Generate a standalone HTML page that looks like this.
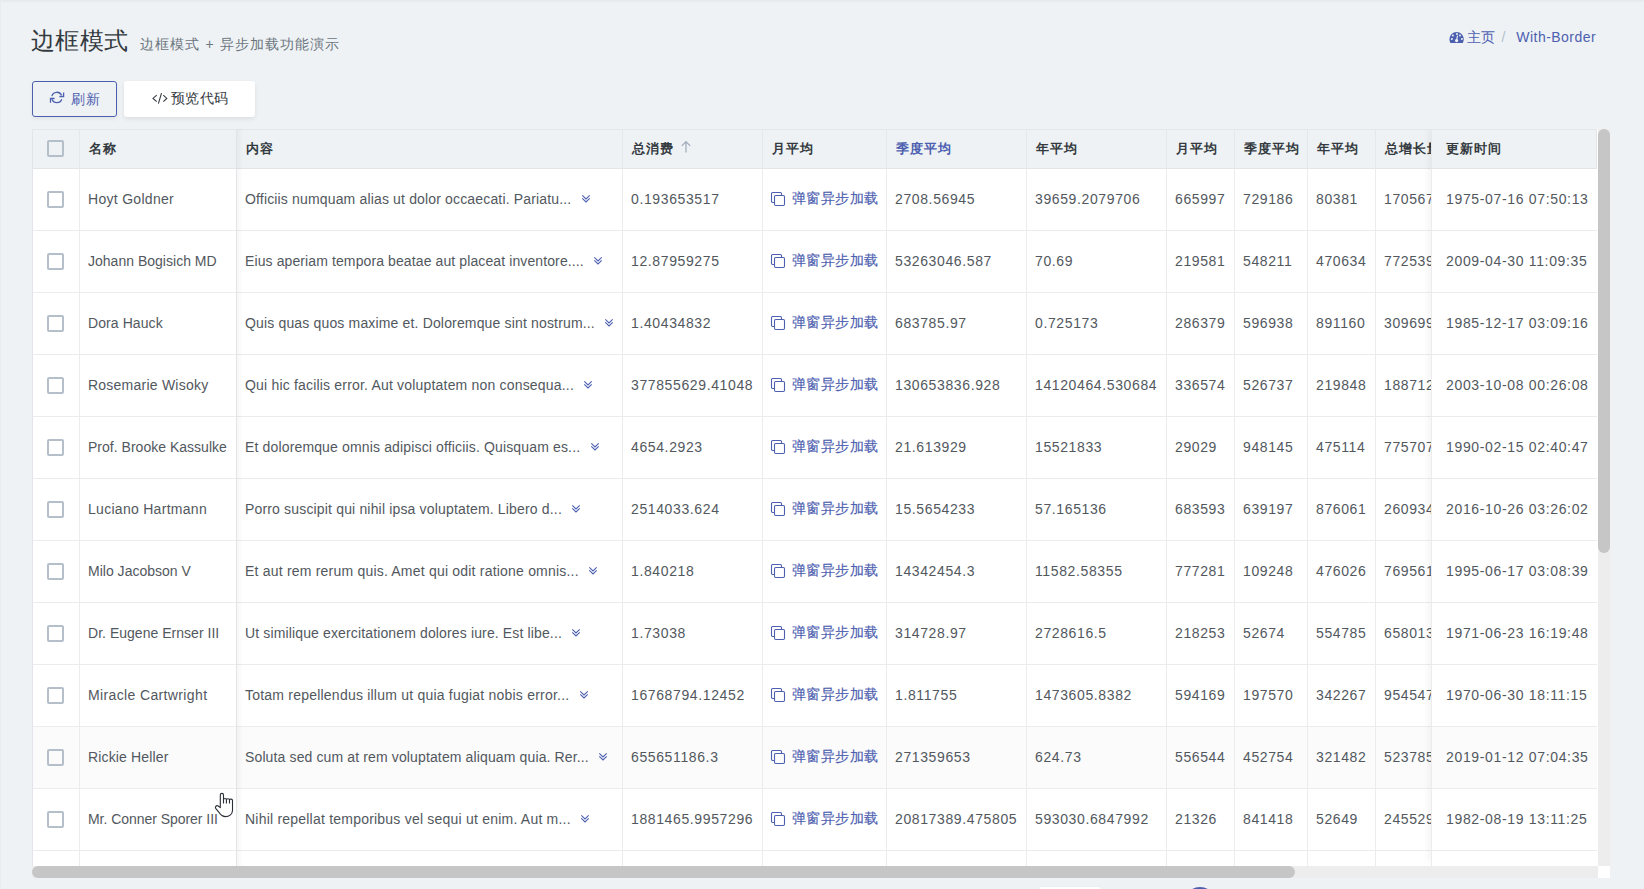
<!DOCTYPE html>
<html><head><meta charset="utf-8">
<style>
*{box-sizing:border-box}
html,body{margin:0;padding:0}
body{width:1644px;height:889px;overflow:hidden;background:#eef2f5;font-family:"Liberation Sans",sans-serif;color:#52585e;position:relative}
.topsh{position:absolute;left:0;top:0;width:1644px;height:3px;background:linear-gradient(#e5e8eb,#eef2f5)}
.lsh0{position:absolute;left:0;top:0;width:1px;height:889px;background:#e9ecef}
.title{position:absolute;left:31px;top:24.5px;font-size:24.4px;line-height:32px;letter-spacing:0.4px;color:#343a40;white-space:nowrap}
.sub{position:absolute;left:140px;top:33.5px;font-size:14px;line-height:20px;color:#6c757d;letter-spacing:1.1px;white-space:nowrap}
.bc{position:absolute;right:48px;top:28px;font-size:14px;line-height:18px;color:#4d60b0;white-space:nowrap;display:flex;align-items:center}
.bc .sep{color:#b3c0cc;margin:0 11px 0 6px}
.bc .wb{letter-spacing:0.45px}
.btn{position:absolute;top:81px;height:36px;border-radius:3px;font-size:14px;white-space:nowrap}
.bt{position:absolute;top:8px;line-height:20px;font-size:13.5px;letter-spacing:0.5px}
.b1{left:32px;width:85px;border:1px solid #4d60b0;color:#4d60b0;box-shadow:0 2px 4px rgba(0,0,0,.06)}
.b2{left:124px;width:131px;background:#fff;color:#343a40;box-shadow:0 2px 4px rgba(0,0,0,.08)}
.wrap{position:absolute;left:32px;top:129px;width:1578px;height:749px;background:#fff}
.tbl{position:absolute;left:0;top:0;width:1566px;height:737px;overflow:hidden;background:#fff}
.c{position:absolute;border-left:1px solid #ececec;border-bottom:1px solid #ececec;display:flex;align-items:center;padding-left:8px;white-space:nowrap;overflow:hidden;font-size:14px}
.hd{padding-left:9px;background:#eef2f5;border-top:1px solid #e4e7ea;border-bottom-color:#e2e4e7;border-left-color:#e6e7e9}
.first{justify-content:center;padding-left:0;border-left-color:#e1e4e8}
.bd{background:#fff;padding-bottom:2px}
.hov{background:#fbfbfc}
.cb{width:17px;height:17px;border:2px solid #b4bfca;border-radius:2px;background:transparent;margin-left:-1px}
.ht{font-weight:bold;color:#343a40;font-size:13px;letter-spacing:1px;margin-top:0.5px}
.ht.blue{color:#4d60b0}
.sort{margin-left:6.5px;flex:none;margin-top:-3.5px}
.tx{letter-spacing:0.12px}
.num{letter-spacing:0.62px}
.fr .num{letter-spacing:0.66px}
.chev{margin-left:9.5px;margin-top:1px;flex:none}
.copy{flex:none;margin-left:-1px;margin-right:6px;margin-top:1px}
.lk{color:#4d60b0;font-size:13.5px;letter-spacing:0.4px;margin-top:1px;-webkit-text-stroke:0.15px #4d60b0}
.fix{position:absolute;left:1399px;top:0;width:167px;height:733px;background:#fff;box-shadow:-3px 0 6px rgba(0,0,0,.045)}
.fr{padding-left:14px}
.hd .cb{margin-top:-1px}
.bd .cb{margin-top:2px}
.lfix{position:absolute;left:204px;top:0;width:1px;height:737px;background:#e3e4e6}
.lsh{position:absolute;left:205px;top:0;width:6px;height:737px;background:linear-gradient(90deg,rgba(0,0,0,.035),rgba(0,0,0,0))}
.fix .c:first-child{border-top:1px solid #e4e7ea;border-right:1px solid #e3e5e8}
.vs{position:absolute;left:1566px;top:0;width:12px;height:737px;background:#ededed}
.vs .th{position:absolute;left:0;top:0;width:12px;height:424px;border-radius:6px;background:#c6c6c6}
.hs{position:absolute;left:0;top:737px;width:1566px;height:12px;background:#ededed}
.hs .th{position:absolute;left:0;top:0;width:1263px;height:12px;border-radius:6px;background:#c6c6c6}
.corner{position:absolute;left:1566px;top:737px;width:12px;height:12px;background:#fff}
.cursor{position:absolute;left:214px;top:792px}
.pg1{position:absolute;left:1039px;top:887px;width:62px;height:6px;background:#fff;border-radius:3px;box-shadow:0 0 2px rgba(0,0,0,.05)}
.pg2{position:absolute;left:1184px;top:887px;width:32px;height:32px;border-radius:50%;background:#4d60b0}
</style></head><body>
<div class="topsh"></div><div class="lsh0"></div>
<div class="title">边框模式</div>
<div class="sub">边框模式 + 异步加载功能演示</div>
<div class="bc">
<svg width="16" height="13" viewBox="0 0 16 13" style="margin-right:2px;margin-left:1px;margin-top:1px"><path d="M1.4 11.9 C0.9 11 0.5 9.6 0.5 8.2 C0.5 4.2 3.8 1 7.6 1 C11.4 1 14.7 4.2 14.7 8.2 C14.7 9.6 14.3 11 13.8 11.9 Z" fill="#4d60b0"/><circle cx="8" cy="3.1" r="1" fill="#eef2f5"/><circle cx="3.9" cy="4.5" r="1" fill="#eef2f5"/><circle cx="11" cy="4.5" r="1" fill="#eef2f5"/><circle cx="2.9" cy="8.1" r="1" fill="#eef2f5"/><circle cx="12.9" cy="8.1" r="1" fill="#eef2f5"/><path d="M8.5 4.6 L7.7 9" stroke="#eef2f5" stroke-width="1.1"/><circle cx="7.6" cy="9.6" r="1.6" fill="#eef2f5"/></svg>
<span>主页</span><span class="sep">/</span><span class="wb">With-Border</span></div>
<div class="btn b1"><svg style="position:absolute;left:16px;top:9px" width="16" height="13" viewBox="0 0 16 13"><path d="M2.86 5.19 A5.2 5.2 0 0 1 12.61 4.25 M12.79 8.23 A5.2 5.2 0 0 1 3.01 8.23" fill="none" stroke="#4d60b0" stroke-width="1.25"/><path d="M14.6 1.4 V5.5 H10.4" fill="none" stroke="#4d60b0" stroke-width="1.3"/><path d="M1.5 11.7 V7.5 H5.6" fill="none" stroke="#4d60b0" stroke-width="1.3"/></svg><span class="bt" style="left:38px;top:7.5px">刷新</span></div>
<div class="btn b2"><svg style="position:absolute;left:28px;top:11px" width="16" height="13" viewBox="0 0 16 13"><path d="M4.7 3.2 L1 6.4 L4.7 9.6 M11.3 3.2 L14.8 6.4 L11.3 9.6 M9.5 1.1 L6.4 11.6" fill="none" stroke="#343a40" stroke-width="1.1"/></svg><span class="bt" style="left:46.5px;top:7.5px">预览代码</span></div>
<div class="wrap">
<div class="tbl">
<div class="c hd first" style="left:0px;top:0px;width:47px;height:40px"><div class="cb"></div></div>
<div class="c hd" style="left:47px;top:0px;width:157px;height:40px"><span class="ht">名称</span></div>
<div class="c hd" style="left:204px;top:0px;width:386px;height:40px"><span class="ht">内容</span></div>
<div class="c hd" style="left:590px;top:0px;width:140px;height:40px"><span class="ht">总消费</span><svg class="sort" width="10" height="12" viewBox="0 0 10 12"><path d="M0.8 4.9 L5 0.7 L9.2 4.9 M5 1 V11.4" fill="none" stroke="#9ea9ba" stroke-width="1.2"/></svg></div>
<div class="c hd" style="left:730px;top:0px;width:124px;height:40px"><span class="ht">月平均</span></div>
<div class="c hd" style="left:854px;top:0px;width:140px;height:40px"><span class="ht blue">季度平均</span></div>
<div class="c hd" style="left:994px;top:0px;width:140px;height:40px"><span class="ht">年平均</span></div>
<div class="c hd" style="left:1134px;top:0px;width:68px;height:40px"><span class="ht">月平均</span></div>
<div class="c hd" style="left:1202px;top:0px;width:73px;height:40px"><span class="ht">季度平均</span></div>
<div class="c hd" style="left:1275px;top:0px;width:68px;height:40px"><span class="ht">年平均</span></div>
<div class="c hd" style="left:1343px;top:0px;width:72px;height:40px"><span class="ht">总增长量</span></div>
<div class="c bd first" style="left:0px;top:40px;width:47px;height:62px"><div class="cb"></div></div>
<div class="c bd" style="left:47px;top:40px;width:157px;height:62px"><span class="tx" style="letter-spacing:0.293px">Hoyt Goldner</span></div>
<div class="c bd" style="left:204px;top:40px;width:386px;height:62px"><span class="tx" style="letter-spacing:0.158px">Officiis numquam alias ut dolor occaecati. Pariatu...</span><svg class="chev" width="10" height="10" viewBox="0 0 10 10"><path d="M1.3 1.4 L5 5 L8.7 1.4 M1.3 4.4 L5 8 L8.7 4.4" fill="none" stroke="#4d60b0" stroke-width="1.1"/></svg></div>
<div class="c bd" style="left:590px;top:40px;width:140px;height:62px"><span class="num">0.193653517</span></div>
<div class="c bd" style="left:730px;top:40px;width:124px;height:62px"><svg class="copy" width="16" height="16" viewBox="0 0 16 16"><path d="M4.5 11.5 H2.7 Q1.5 11.5 1.5 10.3 V2.7 Q1.5 1.5 2.7 1.5 H10.3 Q11.5 1.5 11.5 2.7 V4.5" fill="none" stroke="#4d60b0" stroke-width="1.1"/><rect x="4.5" y="4.5" width="10" height="10" rx="1.2" fill="none" stroke="#4d60b0" stroke-width="1.1"/></svg><span class="lk">弹窗异步加载</span></div>
<div class="c bd" style="left:854px;top:40px;width:140px;height:62px"><span class="num">2708.56945</span></div>
<div class="c bd" style="left:994px;top:40px;width:140px;height:62px"><span class="num">39659.2079706</span></div>
<div class="c bd" style="left:1134px;top:40px;width:68px;height:62px"><span class="num">665997</span></div>
<div class="c bd" style="left:1202px;top:40px;width:73px;height:62px"><span class="num">729186</span></div>
<div class="c bd" style="left:1275px;top:40px;width:68px;height:62px"><span class="num">80381</span></div>
<div class="c bd" style="left:1343px;top:40px;width:72px;height:62px"><span class="num">1705672</span></div>
<div class="c bd first" style="left:0px;top:102px;width:47px;height:62px"><div class="cb"></div></div>
<div class="c bd" style="left:47px;top:102px;width:157px;height:62px"><span class="tx" style="letter-spacing:0.014px">Johann Bogisich MD</span></div>
<div class="c bd" style="left:204px;top:102px;width:386px;height:62px"><span class="tx" style="letter-spacing:0.107px">Eius aperiam tempora beatae aut placeat inventore....</span><svg class="chev" width="10" height="10" viewBox="0 0 10 10"><path d="M1.3 1.4 L5 5 L8.7 1.4 M1.3 4.4 L5 8 L8.7 4.4" fill="none" stroke="#4d60b0" stroke-width="1.1"/></svg></div>
<div class="c bd" style="left:590px;top:102px;width:140px;height:62px"><span class="num">12.87959275</span></div>
<div class="c bd" style="left:730px;top:102px;width:124px;height:62px"><svg class="copy" width="16" height="16" viewBox="0 0 16 16"><path d="M4.5 11.5 H2.7 Q1.5 11.5 1.5 10.3 V2.7 Q1.5 1.5 2.7 1.5 H10.3 Q11.5 1.5 11.5 2.7 V4.5" fill="none" stroke="#4d60b0" stroke-width="1.1"/><rect x="4.5" y="4.5" width="10" height="10" rx="1.2" fill="none" stroke="#4d60b0" stroke-width="1.1"/></svg><span class="lk">弹窗异步加载</span></div>
<div class="c bd" style="left:854px;top:102px;width:140px;height:62px"><span class="num">53263046.587</span></div>
<div class="c bd" style="left:994px;top:102px;width:140px;height:62px"><span class="num">70.69</span></div>
<div class="c bd" style="left:1134px;top:102px;width:68px;height:62px"><span class="num">219581</span></div>
<div class="c bd" style="left:1202px;top:102px;width:73px;height:62px"><span class="num">548211</span></div>
<div class="c bd" style="left:1275px;top:102px;width:68px;height:62px"><span class="num">470634</span></div>
<div class="c bd" style="left:1343px;top:102px;width:72px;height:62px"><span class="num">7725391</span></div>
<div class="c bd first" style="left:0px;top:164px;width:47px;height:62px"><div class="cb"></div></div>
<div class="c bd" style="left:47px;top:164px;width:157px;height:62px"><span class="tx" style="letter-spacing:0.087px">Dora Hauck</span></div>
<div class="c bd" style="left:204px;top:164px;width:386px;height:62px"><span class="tx" style="letter-spacing:0.159px">Quis quas quos maxime et. Doloremque sint nostrum...</span><svg class="chev" width="10" height="10" viewBox="0 0 10 10"><path d="M1.3 1.4 L5 5 L8.7 1.4 M1.3 4.4 L5 8 L8.7 4.4" fill="none" stroke="#4d60b0" stroke-width="1.1"/></svg></div>
<div class="c bd" style="left:590px;top:164px;width:140px;height:62px"><span class="num">1.40434832</span></div>
<div class="c bd" style="left:730px;top:164px;width:124px;height:62px"><svg class="copy" width="16" height="16" viewBox="0 0 16 16"><path d="M4.5 11.5 H2.7 Q1.5 11.5 1.5 10.3 V2.7 Q1.5 1.5 2.7 1.5 H10.3 Q11.5 1.5 11.5 2.7 V4.5" fill="none" stroke="#4d60b0" stroke-width="1.1"/><rect x="4.5" y="4.5" width="10" height="10" rx="1.2" fill="none" stroke="#4d60b0" stroke-width="1.1"/></svg><span class="lk">弹窗异步加载</span></div>
<div class="c bd" style="left:854px;top:164px;width:140px;height:62px"><span class="num">683785.97</span></div>
<div class="c bd" style="left:994px;top:164px;width:140px;height:62px"><span class="num">0.725173</span></div>
<div class="c bd" style="left:1134px;top:164px;width:68px;height:62px"><span class="num">286379</span></div>
<div class="c bd" style="left:1202px;top:164px;width:73px;height:62px"><span class="num">596938</span></div>
<div class="c bd" style="left:1275px;top:164px;width:68px;height:62px"><span class="num">891160</span></div>
<div class="c bd" style="left:1343px;top:164px;width:72px;height:62px"><span class="num">3096991</span></div>
<div class="c bd first" style="left:0px;top:226px;width:47px;height:62px"><div class="cb"></div></div>
<div class="c bd" style="left:47px;top:226px;width:157px;height:62px"><span class="tx" style="letter-spacing:0.233px">Rosemarie Wisoky</span></div>
<div class="c bd" style="left:204px;top:226px;width:386px;height:62px"><span class="tx" style="letter-spacing:0.187px">Qui hic facilis error. Aut voluptatem non consequa...</span><svg class="chev" width="10" height="10" viewBox="0 0 10 10"><path d="M1.3 1.4 L5 5 L8.7 1.4 M1.3 4.4 L5 8 L8.7 4.4" fill="none" stroke="#4d60b0" stroke-width="1.1"/></svg></div>
<div class="c bd" style="left:590px;top:226px;width:140px;height:62px"><span class="num">377855629.41048</span></div>
<div class="c bd" style="left:730px;top:226px;width:124px;height:62px"><svg class="copy" width="16" height="16" viewBox="0 0 16 16"><path d="M4.5 11.5 H2.7 Q1.5 11.5 1.5 10.3 V2.7 Q1.5 1.5 2.7 1.5 H10.3 Q11.5 1.5 11.5 2.7 V4.5" fill="none" stroke="#4d60b0" stroke-width="1.1"/><rect x="4.5" y="4.5" width="10" height="10" rx="1.2" fill="none" stroke="#4d60b0" stroke-width="1.1"/></svg><span class="lk">弹窗异步加载</span></div>
<div class="c bd" style="left:854px;top:226px;width:140px;height:62px"><span class="num">130653836.928</span></div>
<div class="c bd" style="left:994px;top:226px;width:140px;height:62px"><span class="num">14120464.530684</span></div>
<div class="c bd" style="left:1134px;top:226px;width:68px;height:62px"><span class="num">336574</span></div>
<div class="c bd" style="left:1202px;top:226px;width:73px;height:62px"><span class="num">526737</span></div>
<div class="c bd" style="left:1275px;top:226px;width:68px;height:62px"><span class="num">219848</span></div>
<div class="c bd" style="left:1343px;top:226px;width:72px;height:62px"><span class="num">1887123</span></div>
<div class="c bd first" style="left:0px;top:288px;width:47px;height:62px"><div class="cb"></div></div>
<div class="c bd" style="left:47px;top:288px;width:157px;height:62px"><span class="tx" style="letter-spacing:0.015px">Prof. Brooke Kassulke</span></div>
<div class="c bd" style="left:204px;top:288px;width:386px;height:62px"><span class="tx" style="letter-spacing:0.149px">Et doloremque omnis adipisci officiis. Quisquam es...</span><svg class="chev" width="10" height="10" viewBox="0 0 10 10"><path d="M1.3 1.4 L5 5 L8.7 1.4 M1.3 4.4 L5 8 L8.7 4.4" fill="none" stroke="#4d60b0" stroke-width="1.1"/></svg></div>
<div class="c bd" style="left:590px;top:288px;width:140px;height:62px"><span class="num">4654.2923</span></div>
<div class="c bd" style="left:730px;top:288px;width:124px;height:62px"><svg class="copy" width="16" height="16" viewBox="0 0 16 16"><path d="M4.5 11.5 H2.7 Q1.5 11.5 1.5 10.3 V2.7 Q1.5 1.5 2.7 1.5 H10.3 Q11.5 1.5 11.5 2.7 V4.5" fill="none" stroke="#4d60b0" stroke-width="1.1"/><rect x="4.5" y="4.5" width="10" height="10" rx="1.2" fill="none" stroke="#4d60b0" stroke-width="1.1"/></svg><span class="lk">弹窗异步加载</span></div>
<div class="c bd" style="left:854px;top:288px;width:140px;height:62px"><span class="num">21.613929</span></div>
<div class="c bd" style="left:994px;top:288px;width:140px;height:62px"><span class="num">15521833</span></div>
<div class="c bd" style="left:1134px;top:288px;width:68px;height:62px"><span class="num">29029</span></div>
<div class="c bd" style="left:1202px;top:288px;width:73px;height:62px"><span class="num">948145</span></div>
<div class="c bd" style="left:1275px;top:288px;width:68px;height:62px"><span class="num">475114</span></div>
<div class="c bd" style="left:1343px;top:288px;width:72px;height:62px"><span class="num">7757071</span></div>
<div class="c bd first" style="left:0px;top:350px;width:47px;height:62px"><div class="cb"></div></div>
<div class="c bd" style="left:47px;top:350px;width:157px;height:62px"><span class="tx" style="letter-spacing:0.287px">Luciano Hartmann</span></div>
<div class="c bd" style="left:204px;top:350px;width:386px;height:62px"><span class="tx" style="letter-spacing:0.166px">Porro suscipit qui nihil ipsa voluptatem. Libero d...</span><svg class="chev" width="10" height="10" viewBox="0 0 10 10"><path d="M1.3 1.4 L5 5 L8.7 1.4 M1.3 4.4 L5 8 L8.7 4.4" fill="none" stroke="#4d60b0" stroke-width="1.1"/></svg></div>
<div class="c bd" style="left:590px;top:350px;width:140px;height:62px"><span class="num">2514033.624</span></div>
<div class="c bd" style="left:730px;top:350px;width:124px;height:62px"><svg class="copy" width="16" height="16" viewBox="0 0 16 16"><path d="M4.5 11.5 H2.7 Q1.5 11.5 1.5 10.3 V2.7 Q1.5 1.5 2.7 1.5 H10.3 Q11.5 1.5 11.5 2.7 V4.5" fill="none" stroke="#4d60b0" stroke-width="1.1"/><rect x="4.5" y="4.5" width="10" height="10" rx="1.2" fill="none" stroke="#4d60b0" stroke-width="1.1"/></svg><span class="lk">弹窗异步加载</span></div>
<div class="c bd" style="left:854px;top:350px;width:140px;height:62px"><span class="num">15.5654233</span></div>
<div class="c bd" style="left:994px;top:350px;width:140px;height:62px"><span class="num">57.165136</span></div>
<div class="c bd" style="left:1134px;top:350px;width:68px;height:62px"><span class="num">683593</span></div>
<div class="c bd" style="left:1202px;top:350px;width:73px;height:62px"><span class="num">639197</span></div>
<div class="c bd" style="left:1275px;top:350px;width:68px;height:62px"><span class="num">876061</span></div>
<div class="c bd" style="left:1343px;top:350px;width:72px;height:62px"><span class="num">2609341</span></div>
<div class="c bd first" style="left:0px;top:412px;width:47px;height:62px"><div class="cb"></div></div>
<div class="c bd" style="left:47px;top:412px;width:157px;height:62px"><span class="tx" style="letter-spacing:0.013px">Milo Jacobson V</span></div>
<div class="c bd" style="left:204px;top:412px;width:386px;height:62px"><span class="tx" style="letter-spacing:0.205px">Et aut rem rerum quis. Amet qui odit ratione omnis...</span><svg class="chev" width="10" height="10" viewBox="0 0 10 10"><path d="M1.3 1.4 L5 5 L8.7 1.4 M1.3 4.4 L5 8 L8.7 4.4" fill="none" stroke="#4d60b0" stroke-width="1.1"/></svg></div>
<div class="c bd" style="left:590px;top:412px;width:140px;height:62px"><span class="num">1.840218</span></div>
<div class="c bd" style="left:730px;top:412px;width:124px;height:62px"><svg class="copy" width="16" height="16" viewBox="0 0 16 16"><path d="M4.5 11.5 H2.7 Q1.5 11.5 1.5 10.3 V2.7 Q1.5 1.5 2.7 1.5 H10.3 Q11.5 1.5 11.5 2.7 V4.5" fill="none" stroke="#4d60b0" stroke-width="1.1"/><rect x="4.5" y="4.5" width="10" height="10" rx="1.2" fill="none" stroke="#4d60b0" stroke-width="1.1"/></svg><span class="lk">弹窗异步加载</span></div>
<div class="c bd" style="left:854px;top:412px;width:140px;height:62px"><span class="num">14342454.3</span></div>
<div class="c bd" style="left:994px;top:412px;width:140px;height:62px"><span class="num">11582.58355</span></div>
<div class="c bd" style="left:1134px;top:412px;width:68px;height:62px"><span class="num">777281</span></div>
<div class="c bd" style="left:1202px;top:412px;width:73px;height:62px"><span class="num">109248</span></div>
<div class="c bd" style="left:1275px;top:412px;width:68px;height:62px"><span class="num">476026</span></div>
<div class="c bd" style="left:1343px;top:412px;width:72px;height:62px"><span class="num">7695611</span></div>
<div class="c bd first" style="left:0px;top:474px;width:47px;height:62px"><div class="cb"></div></div>
<div class="c bd" style="left:47px;top:474px;width:157px;height:62px"><span class="tx" style="letter-spacing:0.025px">Dr. Eugene Ernser III</span></div>
<div class="c bd" style="left:204px;top:474px;width:386px;height:62px"><span class="tx" style="letter-spacing:0.137px">Ut similique exercitationem dolores iure. Est libe...</span><svg class="chev" width="10" height="10" viewBox="0 0 10 10"><path d="M1.3 1.4 L5 5 L8.7 1.4 M1.3 4.4 L5 8 L8.7 4.4" fill="none" stroke="#4d60b0" stroke-width="1.1"/></svg></div>
<div class="c bd" style="left:590px;top:474px;width:140px;height:62px"><span class="num">1.73038</span></div>
<div class="c bd" style="left:730px;top:474px;width:124px;height:62px"><svg class="copy" width="16" height="16" viewBox="0 0 16 16"><path d="M4.5 11.5 H2.7 Q1.5 11.5 1.5 10.3 V2.7 Q1.5 1.5 2.7 1.5 H10.3 Q11.5 1.5 11.5 2.7 V4.5" fill="none" stroke="#4d60b0" stroke-width="1.1"/><rect x="4.5" y="4.5" width="10" height="10" rx="1.2" fill="none" stroke="#4d60b0" stroke-width="1.1"/></svg><span class="lk">弹窗异步加载</span></div>
<div class="c bd" style="left:854px;top:474px;width:140px;height:62px"><span class="num">314728.97</span></div>
<div class="c bd" style="left:994px;top:474px;width:140px;height:62px"><span class="num">2728616.5</span></div>
<div class="c bd" style="left:1134px;top:474px;width:68px;height:62px"><span class="num">218253</span></div>
<div class="c bd" style="left:1202px;top:474px;width:73px;height:62px"><span class="num">52674</span></div>
<div class="c bd" style="left:1275px;top:474px;width:68px;height:62px"><span class="num">554785</span></div>
<div class="c bd" style="left:1343px;top:474px;width:72px;height:62px"><span class="num">6580131</span></div>
<div class="c bd first" style="left:0px;top:536px;width:47px;height:62px"><div class="cb"></div></div>
<div class="c bd" style="left:47px;top:536px;width:157px;height:62px"><span class="tx" style="letter-spacing:0.367px">Miracle Cartwright</span></div>
<div class="c bd" style="left:204px;top:536px;width:386px;height:62px"><span class="tx" style="letter-spacing:0.218px">Totam repellendus illum ut quia fugiat nobis error...</span><svg class="chev" width="10" height="10" viewBox="0 0 10 10"><path d="M1.3 1.4 L5 5 L8.7 1.4 M1.3 4.4 L5 8 L8.7 4.4" fill="none" stroke="#4d60b0" stroke-width="1.1"/></svg></div>
<div class="c bd" style="left:590px;top:536px;width:140px;height:62px"><span class="num">16768794.12452</span></div>
<div class="c bd" style="left:730px;top:536px;width:124px;height:62px"><svg class="copy" width="16" height="16" viewBox="0 0 16 16"><path d="M4.5 11.5 H2.7 Q1.5 11.5 1.5 10.3 V2.7 Q1.5 1.5 2.7 1.5 H10.3 Q11.5 1.5 11.5 2.7 V4.5" fill="none" stroke="#4d60b0" stroke-width="1.1"/><rect x="4.5" y="4.5" width="10" height="10" rx="1.2" fill="none" stroke="#4d60b0" stroke-width="1.1"/></svg><span class="lk">弹窗异步加载</span></div>
<div class="c bd" style="left:854px;top:536px;width:140px;height:62px"><span class="num">1.811755</span></div>
<div class="c bd" style="left:994px;top:536px;width:140px;height:62px"><span class="num">1473605.8382</span></div>
<div class="c bd" style="left:1134px;top:536px;width:68px;height:62px"><span class="num">594169</span></div>
<div class="c bd" style="left:1202px;top:536px;width:73px;height:62px"><span class="num">197570</span></div>
<div class="c bd" style="left:1275px;top:536px;width:68px;height:62px"><span class="num">342267</span></div>
<div class="c bd" style="left:1343px;top:536px;width:72px;height:62px"><span class="num">9545471</span></div>
<div class="c bd first hov" style="left:0px;top:598px;width:47px;height:62px"><div class="cb"></div></div>
<div class="c bd hov" style="left:47px;top:598px;width:157px;height:62px"><span class="tx" style="letter-spacing:0.145px">Rickie Heller</span></div>
<div class="c bd hov" style="left:204px;top:598px;width:386px;height:62px"><span class="tx" style="letter-spacing:0.130px">Soluta sed cum at rem voluptatem aliquam quia. Rer...</span><svg class="chev" width="10" height="10" viewBox="0 0 10 10"><path d="M1.3 1.4 L5 5 L8.7 1.4 M1.3 4.4 L5 8 L8.7 4.4" fill="none" stroke="#4d60b0" stroke-width="1.1"/></svg></div>
<div class="c bd hov" style="left:590px;top:598px;width:140px;height:62px"><span class="num">655651186.3</span></div>
<div class="c bd hov" style="left:730px;top:598px;width:124px;height:62px"><svg class="copy" width="16" height="16" viewBox="0 0 16 16"><path d="M4.5 11.5 H2.7 Q1.5 11.5 1.5 10.3 V2.7 Q1.5 1.5 2.7 1.5 H10.3 Q11.5 1.5 11.5 2.7 V4.5" fill="none" stroke="#4d60b0" stroke-width="1.1"/><rect x="4.5" y="4.5" width="10" height="10" rx="1.2" fill="none" stroke="#4d60b0" stroke-width="1.1"/></svg><span class="lk">弹窗异步加载</span></div>
<div class="c bd hov" style="left:854px;top:598px;width:140px;height:62px"><span class="num">271359653</span></div>
<div class="c bd hov" style="left:994px;top:598px;width:140px;height:62px"><span class="num">624.73</span></div>
<div class="c bd hov" style="left:1134px;top:598px;width:68px;height:62px"><span class="num">556544</span></div>
<div class="c bd hov" style="left:1202px;top:598px;width:73px;height:62px"><span class="num">452754</span></div>
<div class="c bd hov" style="left:1275px;top:598px;width:68px;height:62px"><span class="num">321482</span></div>
<div class="c bd hov" style="left:1343px;top:598px;width:72px;height:62px"><span class="num">5237851</span></div>
<div class="c bd first" style="left:0px;top:660px;width:47px;height:62px"><div class="cb"></div></div>
<div class="c bd" style="left:47px;top:660px;width:157px;height:62px"><span class="tx" style="letter-spacing:-0.040px">Mr. Conner Sporer III</span></div>
<div class="c bd" style="left:204px;top:660px;width:386px;height:62px"><span class="tx" style="letter-spacing:0.216px">Nihil repellat temporibus vel sequi ut enim. Aut m...</span><svg class="chev" width="10" height="10" viewBox="0 0 10 10"><path d="M1.3 1.4 L5 5 L8.7 1.4 M1.3 4.4 L5 8 L8.7 4.4" fill="none" stroke="#4d60b0" stroke-width="1.1"/></svg></div>
<div class="c bd" style="left:590px;top:660px;width:140px;height:62px"><span class="num">1881465.9957296</span></div>
<div class="c bd" style="left:730px;top:660px;width:124px;height:62px"><svg class="copy" width="16" height="16" viewBox="0 0 16 16"><path d="M4.5 11.5 H2.7 Q1.5 11.5 1.5 10.3 V2.7 Q1.5 1.5 2.7 1.5 H10.3 Q11.5 1.5 11.5 2.7 V4.5" fill="none" stroke="#4d60b0" stroke-width="1.1"/><rect x="4.5" y="4.5" width="10" height="10" rx="1.2" fill="none" stroke="#4d60b0" stroke-width="1.1"/></svg><span class="lk">弹窗异步加载</span></div>
<div class="c bd" style="left:854px;top:660px;width:140px;height:62px"><span class="num">20817389.475805</span></div>
<div class="c bd" style="left:994px;top:660px;width:140px;height:62px"><span class="num">593030.6847992</span></div>
<div class="c bd" style="left:1134px;top:660px;width:68px;height:62px"><span class="num">21326</span></div>
<div class="c bd" style="left:1202px;top:660px;width:73px;height:62px"><span class="num">841418</span></div>
<div class="c bd" style="left:1275px;top:660px;width:68px;height:62px"><span class="num">52649</span></div>
<div class="c bd" style="left:1343px;top:660px;width:72px;height:62px"><span class="num">2455291</span></div>
<div class="c bd first" style="left:0px;top:722px;width:47px;height:62px"></div>
<div class="c bd" style="left:47px;top:722px;width:157px;height:62px"><span class="tx" style="letter-spacing:0.120px"></span></div>
<div class="c bd" style="left:204px;top:722px;width:386px;height:62px"></div>
<div class="c bd" style="left:590px;top:722px;width:140px;height:62px"><span class="num"></span></div>
<div class="c bd" style="left:730px;top:722px;width:124px;height:62px"></div>
<div class="c bd" style="left:854px;top:722px;width:140px;height:62px"><span class="num"></span></div>
<div class="c bd" style="left:994px;top:722px;width:140px;height:62px"><span class="num"></span></div>
<div class="c bd" style="left:1134px;top:722px;width:68px;height:62px"><span class="num"></span></div>
<div class="c bd" style="left:1202px;top:722px;width:73px;height:62px"><span class="num"></span></div>
<div class="c bd" style="left:1275px;top:722px;width:68px;height:62px"><span class="num"></span></div>
<div class="c bd" style="left:1343px;top:722px;width:72px;height:62px"><span class="num"></span></div>
<div class="lfix"></div><div class="lsh"></div>
<div class="fix">
<div class="c hd fr" style="left:0;top:0;width:166px;height:40px"><span class="ht">更新时间</span></div>
<div class="c bd fr" style="left:0;top:40px;width:166px;height:62px"><span class="num">1975-07-16 07:50:13</span></div>
<div class="c bd fr" style="left:0;top:102px;width:166px;height:62px"><span class="num">2009-04-30 11:09:35</span></div>
<div class="c bd fr" style="left:0;top:164px;width:166px;height:62px"><span class="num">1985-12-17 03:09:16</span></div>
<div class="c bd fr" style="left:0;top:226px;width:166px;height:62px"><span class="num">2003-10-08 00:26:08</span></div>
<div class="c bd fr" style="left:0;top:288px;width:166px;height:62px"><span class="num">1990-02-15 02:40:47</span></div>
<div class="c bd fr" style="left:0;top:350px;width:166px;height:62px"><span class="num">2016-10-26 03:26:02</span></div>
<div class="c bd fr" style="left:0;top:412px;width:166px;height:62px"><span class="num">1995-06-17 03:08:39</span></div>
<div class="c bd fr" style="left:0;top:474px;width:166px;height:62px"><span class="num">1971-06-23 16:19:48</span></div>
<div class="c bd fr" style="left:0;top:536px;width:166px;height:62px"><span class="num">1970-06-30 18:11:15</span></div>
<div class="c bd fr hov" style="left:0;top:598px;width:166px;height:62px"><span class="num">2019-01-12 07:04:35</span></div>
<div class="c bd fr" style="left:0;top:660px;width:166px;height:62px"><span class="num">1982-08-19 13:11:25</span></div>
<div class="c bd fr" style="left:0;top:722px;width:166px;height:62px"><span class="num"></span></div>
</div>
</div>
<div class="vs"><div class="th"></div></div>
<div class="hs"><div class="th"></div></div>
<div class="corner"></div>
</div>
<svg class="cursor" width="22" height="27" viewBox="0 0 22 27"><path d="M6.3 15.6 V2.9 C6.3 0.8 9.5 0.8 9.5 2.9 V7.6 C9.5 6.2 12.4 6.2 12.4 7.6 C12.4 6.4 15.5 6.4 15.5 7.8 C15.5 6.8 18.5 6.8 18.5 8.4 V18.6 C18.5 21.8 15.5 24.6 11.3 24.6 C8.6 24.6 7.2 23.4 5.6 21.2 L1.7 16.4 C0.8 15.2 2.2 13.2 3.8 13.8 Z" fill="#fff" stroke="#2a2e36" stroke-width="1.1" stroke-linejoin="round"/><path d="M9.5 7.6 V11.6 M12.4 7.6 V11.6 M15.5 7.8 V11.6" fill="none" stroke="#2a2e36" stroke-width="1.1"/></svg>
<div class="pg1"></div><div class="pg2"></div>
</body></html>
